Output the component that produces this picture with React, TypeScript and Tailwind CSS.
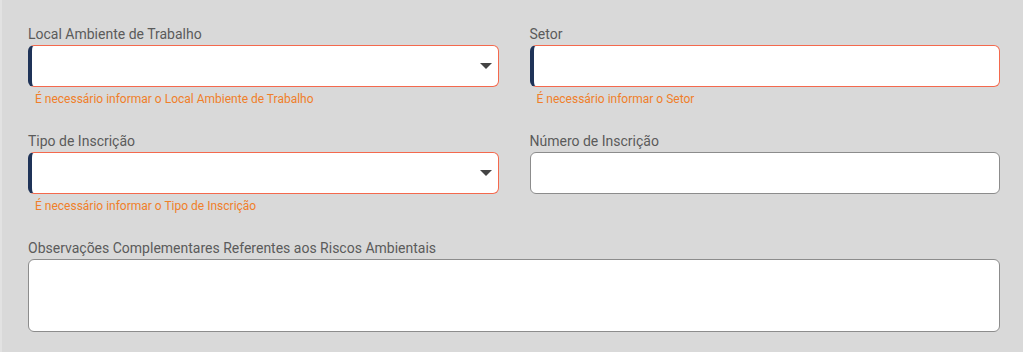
type FieldProps = {
  label: string;
  error?: string;
  select?: boolean;
};

function Field({ label, error, select }: FieldProps) {
  const invalid = Boolean(error);
  return (
    <div className="flex flex-col">
      <label className="h-[21px] text-[14px] leading-[20px] text-[#5b5b5b]">{label}</label>
      <div
        className={
          invalid
            ? "relative h-[42px] rounded-[6px] border border-[#f4694d] border-l-4 border-l-[#1f3358] bg-white"
            : "relative h-[42px] rounded-[6px] border border-[#8c8c8c] bg-white"
        }
      >
        {select && (
          <svg
            className="absolute right-[6px] top-[17px]"
            width="12"
            height="6"
            viewBox="0 0 12 6"
          >
            <path d="M0 0 L12 0 L6 6 Z" fill="#444" />
          </svg>
        )}
      </div>
      {error ? (
        <p className="mt-[4px] h-[17px] pl-[7px] text-[12px] leading-[17px] text-[#f07f2a]">{error}</p>
      ) : (
        <div className="mt-[4px] h-[17px]" />
      )}
    </div>
  );
}

export default function App() {
  return (
    <div
      className="h-[352px] w-[1023px] border-l-2 border-l-[#e2e2e2] bg-[#d9d9d9] pl-[26px] pr-[23px] pt-[24px]"
      style={{ fontFamily: "Roboto, 'Noto Sans', sans-serif" }}
    >
      <div className="grid grid-cols-2 gap-x-[31px] gap-y-[23px]">
        <Field
          label="Local Ambiente de Trabalho"
          error="É necessário informar o Local Ambiente de Trabalho"
          select
        />
        <Field label="Setor" error="É necessário informar o Setor" />
        <Field
          label="Tipo de Inscrição"
          error="É necessário informar o Tipo de Inscrição"
          select
        />
        <Field label="Número de Inscrição" />
        <div className="col-span-2 flex flex-col">
          <label className="h-[21px] text-[14px] leading-[20px] text-[#5b5b5b]">
            Observações Complementares Referentes aos Riscos Ambientais
          </label>
          <textarea className="h-[73px] resize-none rounded-[6px] border border-[#8c8c8c] bg-white outline-none" />
        </div>
      </div>
    </div>
  );
}
